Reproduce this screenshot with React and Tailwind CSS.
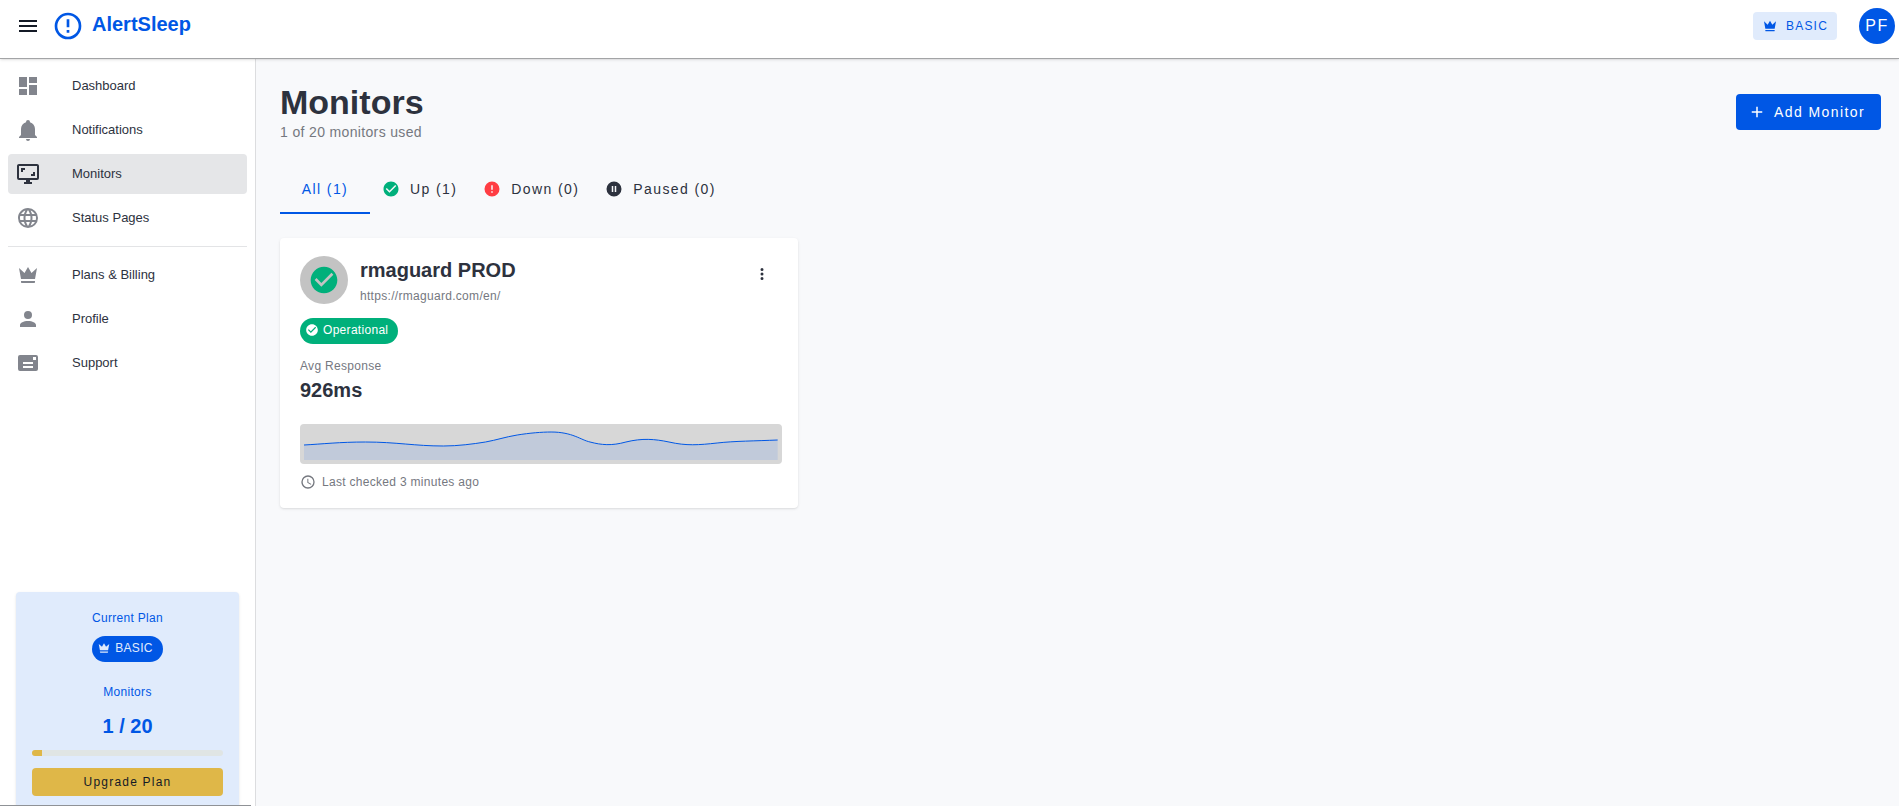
import React, { useState } from "react";

const icons = {
  menu: "M3,6H21V8H3V6M3,11H21V13H3V11M3,16H21V18H3V16Z",
  alertOutline:
    "M11,15H13V17H11V15M11,7H13V13H11V7M12,2C6.47,2 2,6.5 2,12A10,10 0 0,0 12,22A10,10 0 0,0 22,12A10,10 0 0,0 12,2M12,20A8,8 0 0,1 4,12A8,8 0 0,1 12,4A8,8 0 0,1 20,12A8,8 0 0,1 12,20Z",
  dashboard: "M13,3V9H21V3M13,21H21V11H13M3,21H11V15H3M3,13H11V3H3V13Z",
  bell: "M21,19V20H3V19L5,17V11C5,7.9 7.03,5.17 10,4.29C10,4.19 10,4.1 10,4A2,2 0 0,1 12,2A2,2 0 0,1 14,4C14,4.1 14,4.19 14,4.29C16.97,5.17 19,7.9 19,11V17L21,19M14,21A2,2 0 0,1 12,23A2,2 0 0,1 10,21",
  monitor:
    "M9,6H5V10H7V8H9M19,10H17V12H15V14H19M21,16H3V4H21M21,2H3C1.89,2 1,2.89 1,4V16A2,2 0 0,0 3,18H10V20H8V22H16V20H14V18H21A2,2 0 0,0 23,16V4C23,2.89 22.1,2 21,2",
  web: "M16.36,14C16.44,13.34 16.5,12.68 16.5,12C16.5,11.32 16.44,10.66 16.36,10H19.74C19.9,10.64 20,11.31 20,12C20,12.69 19.9,13.36 19.74,14M14.59,19.56C15.19,18.45 15.65,17.25 15.97,16H18.92C17.96,17.65 16.43,18.93 14.59,19.56M14.34,14H9.66C9.56,13.34 9.5,12.68 9.5,12C9.5,11.32 9.56,10.65 9.66,10H14.34C14.43,10.65 14.5,11.32 14.5,12C14.5,12.68 14.43,13.34 14.34,14M12,19.96C11.17,18.76 10.5,17.43 10.09,16H13.91C13.5,17.43 12.83,18.76 12,19.96M8,8H5.08C6.03,6.34 7.57,5.06 9.4,4.44C8.8,5.55 8.35,6.75 8,8M5.08,16H8C8.35,17.25 8.8,18.45 9.4,19.56C7.57,18.93 6.03,17.65 5.08,16M4.26,14C4.1,13.36 4,12.69 4,12C4,11.31 4.1,10.64 4.26,10H7.64C7.56,10.66 7.5,11.32 7.5,12C7.5,12.68 7.56,13.34 7.64,14M12,4.03C12.83,5.23 13.5,6.57 13.91,8H10.09C10.5,6.57 11.17,5.23 12,4.03M18.92,8H15.97C15.65,6.75 15.19,5.55 14.59,4.44C16.43,5.07 17.96,6.34 18.92,8M12,2C6.47,2 2,6.5 2,12A10,10 0 0,0 12,22A10,10 0 0,0 22,12A10,10 0 0,0 12,2Z",
  crown:
    "M5 16L3 5L8.5 10L12 4L15.5 10L21 5L19 16H5M19 19C19 19.6 18.6 20 18 20H6C5.4 20 5 19.6 5 19V18H19V19Z",
  account:
    "M12,4A4,4 0 0,1 16,8A4,4 0 0,1 12,12A4,4 0 0,1 8,8A4,4 0 0,1 12,4M12,14C16.42,14 20,15.79 20,18V20H4V18C4,15.79 7.58,14 12,14Z",
  support:
    "M20,4H4A2,2 0 0,0 2,6V18A2,2 0 0,0 4,20H20A2,2 0 0,0 22,18V6A2,2 0 0,0 20,4M17,17H7V15H17M17,13H7V11H17M20,9H17V6H20",
  checkCircle:
    "M12 2C6.5 2 2 6.5 2 12S6.5 22 12 22 22 17.5 22 12 17.5 2 12 2M10 17L5 12L6.41 10.59L10 14.17L17.59 6.58L19 8L10 17Z",
  alertCircle:
    "M13,13H11V7H13M13,17H11V15H13M12,2A10,10 0 0,0 2,12A10,10 0 0,0 12,22A10,10 0 0,0 22,12A10,10 0 0,0 12,2Z",
  pauseCircle:
    "M15,16H13V8H15M11,16H9V8H11M12,2A10,10 0 0,0 2,12A10,10 0 0,0 12,22A10,10 0 0,0 22,12A10,10 0 0,0 12,2Z",
  plus: "M19,13H13V19H11V13H5V11H11V5H13V11H19V13Z",
  dots: "M12,16A2,2 0 0,1 14,18A2,2 0 0,1 12,20A2,2 0 0,1 10,18A2,2 0 0,1 12,16M12,10A2,2 0 0,1 14,12A2,2 0 0,1 12,14A2,2 0 0,1 10,12A2,2 0 0,1 12,10M12,4A2,2 0 0,1 14,6A2,2 0 0,1 12,8A2,2 0 0,1 10,6A2,2 0 0,1 12,4Z",
  clock:
    "M12,20A8,8 0 0,0 20,12A8,8 0 0,0 12,4A8,8 0 0,0 4,12A8,8 0 0,0 12,20M12,2A10,10 0 0,1 22,12A10,10 0 0,1 12,22C6.47,22 2,17.5 2,12A10,10 0 0,1 12,2M12.5,7V12.25L17,14.92L16.25,16.15L11,13V7H12.5Z",
};

function Icon({ name, className }) {
  return (
    <svg viewBox="0 0 24 24" fill="currentColor" aria-hidden="true" className={className}>
      <path d={icons[name]} />
    </svg>
  );
}

const mainNav = [
  { label: "Dashboard", icon: "dashboard" },
  { label: "Notifications", icon: "bell" },
  { label: "Monitors", icon: "monitor" },
  { label: "Status Pages", icon: "web" },
];

const accountNav = [
  { label: "Plans & Billing", icon: "crown" },
  { label: "Profile", icon: "account" },
  { label: "Support", icon: "support" },
];

const tabs = [
  { label: "All (1)" },
  { label: "Up (1)", icon: "checkCircle", color: "text-[#00b07b]" },
  { label: "Down (0)", icon: "alertCircle", color: "text-[#ff3d43]" },
  { label: "Paused (0)", icon: "pauseCircle", color: "text-[#2d323e]" },
];

function Chip({ icon, className, children }) {
  return (
    <span
      className={`flex h-[26px] w-fit items-center gap-1 rounded-full pr-[10px] pb-[2px] pl-[5px] text-xs tracking-wide ${className}`}
    >
      <Icon name={icon} className="size-[14px]" />
      {children}
    </span>
  );
}

function NavList({ items, active }) {
  return (
    <ul className="flex flex-col gap-1">
      {items.map((item) => (
        <li key={item.label}>
          <a
            href="#"
            className={`flex h-10 items-center gap-8 rounded px-2 text-[13px] ${
              item.label === active ? "bg-[#e5e6e8]" : ""
            }`}
          >
            <Icon
              name={item.icon}
              className={`size-6 ${item.label === active ? "text-[#2d323e]" : "text-[#82858d]"}`}
            />
            {item.label}
          </a>
        </li>
      ))}
    </ul>
  );
}

function Header() {
  return (
    <header className="z-10 flex h-[59px] shrink-0 items-start justify-between border-b border-[#a3a4a6] bg-white pt-2 pr-1 pl-4 shadow-sm">
      <div className="flex items-center gap-3">
        <button type="button" aria-label="Toggle menu" className="flex h-9 items-center">
          <Icon name="menu" className="size-6 text-[#141a26]" />
        </button>
        <a href="#" className="flex items-center gap-2 text-xl font-bold text-[#0057e5]">
          <Icon name="alertOutline" className="size-8" />
          <span className="pb-1">AlertSleep</span>
        </a>
      </div>
      <div className="flex items-center gap-[22px]">
        <button
          type="button"
          className="flex h-7 items-center gap-2 rounded bg-[#e0ebfc] px-[9px] text-xs tracking-widest text-[#0057e5]"
        >
          <Icon name="crown" className="size-4" />
          BASIC
        </button>
        <button
          type="button"
          className="size-9 rounded-full bg-[#0057e5] text-base tracking-widest text-white"
        >
          PF
        </button>
      </div>
    </header>
  );
}

function PlanCard() {
  return (
    <section className="mx-4 mt-auto flex flex-col items-center rounded-t bg-[#e0ebfc] px-4 pt-4 pb-[9px] text-[#0057e5] shadow">
      <p className="text-xs leading-5 tracking-wide">Current Plan</p>
      <Chip icon="crown" className="mt-2 bg-[#0057e5] text-[#e0ebfc]">
        BASIC
      </Chip>
      <p className="mt-5 text-xs leading-5 tracking-wide">Monitors</p>
      <p className="mt-2 text-xl leading-8 font-bold">1 / 20</p>
      <div className="mt-2 h-[6px] w-full overflow-hidden rounded-full bg-[#e0e5e4]">
        <div className="h-full bg-[#dfb748]" style={{ width: `${(1 / 20) * 100}%` }} />
      </div>
      <button
        type="button"
        className="mt-3 h-7 w-full rounded bg-[#dfb748] text-xs tracking-widest text-[#141a26]"
      >
        Upgrade Plan
      </button>
    </section>
  );
}

function Sidebar() {
  return (
    <aside className="flex w-64 shrink-0 flex-col border-r border-[#dcdddf] bg-white pt-[7px]">
      <nav className="px-2">
        <NavList items={mainNav} active="Monitors" />
        <hr className="my-2 border-[#e3e4e6]" />
        <NavList items={accountNav} />
      </nav>
      <PlanCard />
      <div className="mr-1 h-px bg-[#8f9296]" />
    </aside>
  );
}

function ResponseChart() {
  const line =
    "M0,17C18,16 35,14 60,14C90,14 108,18 136,18C150,18 165,16 177,14C188,12 196,9 208,7C220,5 232,4 241,4C262,4 270,12 279,14C290,17 300,18 314,14C330,10 342,11 356,14C373,18 385,17 403,15C420,13 440,13 462,12";
  return (
    <div className="h-10 rounded bg-[#d7d7d7] p-1">
      <svg viewBox="0 0 462 32" preserveAspectRatio="none" className="h-full w-full">
        <path d={`${line}V32H0Z`} fill="#c1cada" />
        <path d={line} fill="none" stroke="#0057e5" vectorEffect="non-scaling-stroke" />
      </svg>
    </div>
  );
}

function MonitorCard() {
  return (
    <article className="rounded bg-white pt-[18px] pr-4 pb-4 pl-5 shadow-sm">
      <div className="flex items-start gap-3">
        <div className="flex size-12 items-center justify-center rounded-full bg-[#c3c3c3] text-[#00b07b]">
          <Icon name="checkCircle" className="size-8" />
        </div>
        <div className="flex-1">
          <h2 className="text-xl leading-7 font-bold">rmaguard PROD</h2>
          <p className="mt-[2px] text-xs leading-5 tracking-wide text-[#75787f]">
            https://rmaguard.com/en/
          </p>
        </div>
        <button
          type="button"
          aria-label="Monitor options"
          className="flex h-9 w-10 items-center justify-center"
        >
          <Icon name="dots" className="size-[18px]" />
        </button>
      </div>
      <Chip icon="checkCircle" className="mt-3 bg-[#00b07b] text-white">
        Operational
      </Chip>
      <p className="mt-3 text-xs leading-5 tracking-wide text-[#75787f]">Avg Response</p>
      <p className="mb-5 text-xl leading-7 font-bold">926ms</p>
      <ResponseChart />
      <p className="mt-2 flex items-center gap-[6px] text-xs leading-5 tracking-wide text-[#75787f]">
        <Icon name="clock" className="size-4" />
        Last checked 3 minutes ago
      </p>
    </article>
  );
}

function Tabs() {
  const [active, setActive] = useState(0);

  return (
    <div role="tablist" className="mt-6 flex h-12">
      {tabs.map((tab, idx) => (
        <button
          key={tab.label}
          type="button"
          role="tab"
          aria-selected={active === idx}
          onClick={() => setActive(idx)}
          className={`flex items-center justify-center gap-[10px] border-b-2 text-sm tracking-widest ${
            active === idx ? "border-[#0057e5] text-[#0057e5]" : "border-transparent"
          } ${tab.icon ? "pr-[14px] pl-3" : "min-w-[90px] px-4"}`}
        >
          {tab.icon && <Icon name={tab.icon} className={`size-[18px] ${tab.color}`} />}
          {tab.label}
        </button>
      ))}
    </div>
  );
}

function App() {
  return (
    <div className="flex h-screen flex-col overflow-hidden bg-[#f8f9fb] font-['Liberation_Sans',Arial,sans-serif] text-[#2d323e]">
      <Header />
      <div className="flex min-h-0 flex-1">
        <Sidebar />
        <main className="flex-1 overflow-auto pt-[23px] pr-[18px] pl-6">
          <div className="flex items-center justify-between">
            <div>
              <h1 className="text-[34px] leading-10 font-bold">Monitors</h1>
              <p className="text-sm tracking-wide text-[#75787f]">1 of 20 monitors used</p>
            </div>
            <button
              type="button"
              className="flex h-9 items-center gap-2 rounded bg-[#0057e5] pr-4 pl-3 text-sm tracking-widest text-white"
            >
              <Icon name="plus" className="size-[18px]" />
              Add Monitor
            </button>
          </div>
          <Tabs />
          <div className="mt-6 grid grid-cols-1 gap-6 md:grid-cols-2 lg:grid-cols-3">
            <MonitorCard />
          </div>
        </main>
      </div>
    </div>
  );
}

export default App;
